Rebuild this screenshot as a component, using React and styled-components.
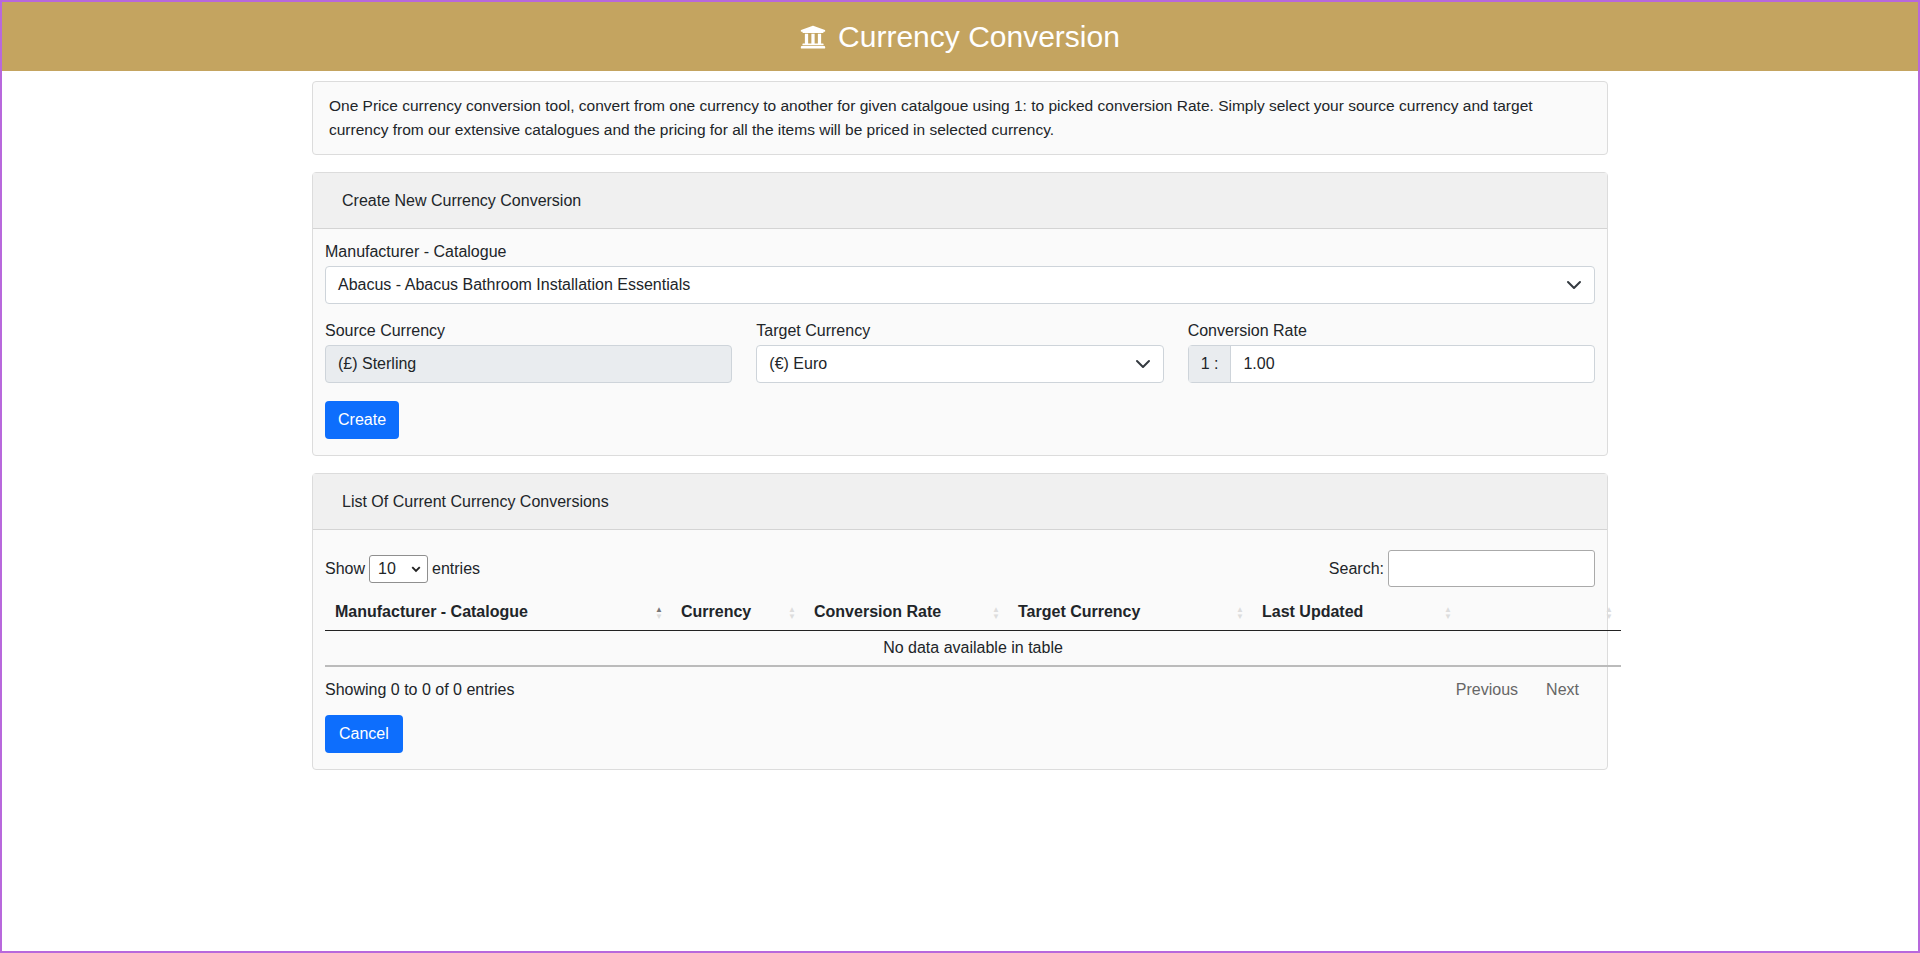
import React from "react";
import styled, { createGlobalStyle } from "styled-components";
import { FaUniversity } from "react-icons/fa";

const Global = createGlobalStyle`
  * { box-sizing: border-box; }
  body { margin: 0; font-family: "Liberation Sans", Arial, sans-serif; font-size: 16px; color: #212529; background: #fff; }
`;

const Frame = styled.div`
  min-height: 953px;
  border: 2px solid #b868dc;
`;
const Header = styled.header`
  background: #c4a460;
  height: 69px;
  display: flex;
  align-items: center;
  justify-content: center;
  gap: 12px;
  color: #fff;
  font-size: 30px;
`;
const Container = styled.main`
  width: 1296px;
  margin: 10px auto 0;
  display: flex;
  flex-direction: column;
  gap: 17px;
`;
const Card = styled.section`
  background: #fafafa;
  border: 1px solid #dcdcdc;
  border-radius: 4px;
`;
const Intro = styled(Card)`
  padding: 12px 16px;
  line-height: 24px;
  font-size: 15.5px;
`;
const CardHead = styled.div`
  background: #f0f0f0;
  border-bottom: 1px solid #d4d4d4;
  height: 56px;
  display: flex;
  align-items: center;
  padding-left: 29px;
  font-size: 16px;
`;
const CardBody = styled.div`
  padding: ${p => p.$pad || "14px 12px 16px"};
`;
const Label = styled.div`
  margin-bottom: 5px;
  font-size: 16px;
`;
const Field = styled.div`
  height: 38px;
  border: 1px solid #ced4da;
  border-radius: 4px;
  background: ${p => (p.$disabled ? "#e9ecef" : "#fff")};
  display: flex;
  align-items: center;
  padding: 0 ${p => (p.$flush ? "0" : "12px")};
  justify-content: space-between;
  font-size: 16px;
`;
const Row = styled.div`
  display: grid;
  grid-template-columns: 1fr 1fr 1fr;
  gap: 24px;
  margin-top: 18px;
`;
const Addon = styled.span`
  background: #e9ecef;
  border-right: 1px solid #ced4da;
  height: 100%;
  display: flex;
  align-items: center;
  padding: 0 12px;
`;
const Btn = styled.button`
  background: #0d6efd;
  color: #fff;
  border: none;
  border-radius: 4px;
  height: 38px;
  padding: 0 ${p => p.$px || "13px"};
  font: inherit;
  font-size: 16px;
  margin-top: ${p => p.$mt || "18px"};
`;
const Chevron = () => (
  <svg width="16" height="16" viewBox="0 0 16 16">
    <path d="M2 5l6 6 6-6" fill="none" stroke="#343a40" strokeWidth="2" strokeLinecap="round" strokeLinejoin="round" />
  </svg>
);
const Controls = styled.div`
  display: flex;
  justify-content: space-between;
  align-items: center;
  margin-top: 8px;
`;
const Inline = styled.div`
  display: flex;
  align-items: center;
  gap: 4px;
`;
const SmallSelect = styled.div`
  border: 1px solid #8f8f8f;
  border-radius: 3px;
  background: #fff;
  height: 28px;
  width: 59px;
  display: flex;
  align-items: center;
  justify-content: space-between;
  padding: 0 6px 0 8px;
`;
const SearchBox = styled.div`
  width: 207px;
  height: 37px;
  border: 1px solid #aaa;
  border-radius: 3px;
  background: #fff;
`;
const Table = styled.table`
  width: 100%;
  border-collapse: collapse;
  margin-top: 8px;
  table-layout: fixed;
`;
const Th = styled.th`
  text-align: left;
  font-weight: bold;
  padding: 8px 10px 9px;
  border-bottom: 1px solid #222;
  position: relative;
  width: ${p => p.$w}px;
`;
const Sort = styled.span`
  position: absolute;
  right: 8px;
  top: 50%;
  transform: translateY(-50%);
  display: flex;
  flex-direction: column;
  gap: 1px;
  font-size: 8px;
  line-height: 6px;
  color: #ddd;
`;
const Arrow = styled.span`
  color: ${p => (p.$on ? "#777" : "#ddd")};
`;
const Td = styled.td`
  text-align: center;
  padding: 8px;
  border-bottom: 2px solid #bbb;
`;
const Footer = styled.div`
  display: flex;
  justify-content: space-between;
  align-items: center;
  margin-top: 14px;
`;
const Pager = styled.div`
  display: flex;
  gap: 28px;
  color: #666;
  padding-right: 16px;
`;

const cols = [
  ["Manufacturer - Catalogue", 346, true],
  ["Currency", 133],
  ["Conversion Rate", 204],
  ["Target Currency", 244],
  ["Last Updated", 208],
  ["", 161],
];

export default function App() {
  return (
    <Frame>
      <Global />
      <Header>
        <FaUniversity size={26} />
        <span>Currency Conversion</span>
      </Header>
      <Container>
        <Intro>
          One Price currency conversion tool, convert from one currency to another for given catalgoue using 1: to picked conversion Rate. Simply select your source currency and target currency from our extensive catalogues and the pricing for all the items will be priced in selected currency.
        </Intro>
        <Card>
          <CardHead>Create New Currency Conversion</CardHead>
          <CardBody>
            <Label>Manufacturer - Catalogue</Label>
            <Field>Abacus - Abacus Bathroom Installation Essentials<Chevron /></Field>
            <Row>
              <div>
                <Label>Source Currency</Label>
                <Field $disabled>(£) Sterling</Field>
              </div>
              <div>
                <Label>Target Currency</Label>
                <Field>(€) Euro<Chevron /></Field>
              </div>
              <div>
                <Label>Conversion Rate</Label>
                <Field $flush style={{ justifyContent: "flex-start" }}>
                  <Addon>1 :</Addon>
                  <span style={{ paddingLeft: 12 }}>1.00</span>
                </Field>
              </div>
            </Row>
            <Btn>Create</Btn>
          </CardBody>
        </Card>
        <Card>
          <CardHead>List Of Current Currency Conversions</CardHead>
          <CardBody $pad="12px 12px 16px">
            <Controls>
              <Inline>
                Show
                <SmallSelect>10<svg width="10" height="10" viewBox="0 0 16 16"><path d="M2 5l6 6 6-6" fill="none" stroke="#222" strokeWidth="3" /></svg></SmallSelect>
                entries
              </Inline>
              <Inline>Search:<SearchBox /></Inline>
            </Controls>
            <Table>
              <thead>
                <tr>
                  {cols.map(([t, w, on]) => (
                    <Th key={t + w} $w={w}>
                      {t}
                      <Sort><Arrow $on={on}>▲</Arrow><Arrow>▼</Arrow></Sort>
                    </Th>
                  ))}
                </tr>
              </thead>
              <tbody>
                <tr><Td colSpan={6}>No data available in table</Td></tr>
              </tbody>
            </Table>
            <Footer>
              <span>Showing 0 to 0 of 0 entries</span>
              <Pager><span>Previous</span><span>Next</span></Pager>
            </Footer>
            <Btn $mt="16px" $px="14px">Cancel</Btn>
          </CardBody>
        </Card>
      </Container>
    </Frame>
  );
}
